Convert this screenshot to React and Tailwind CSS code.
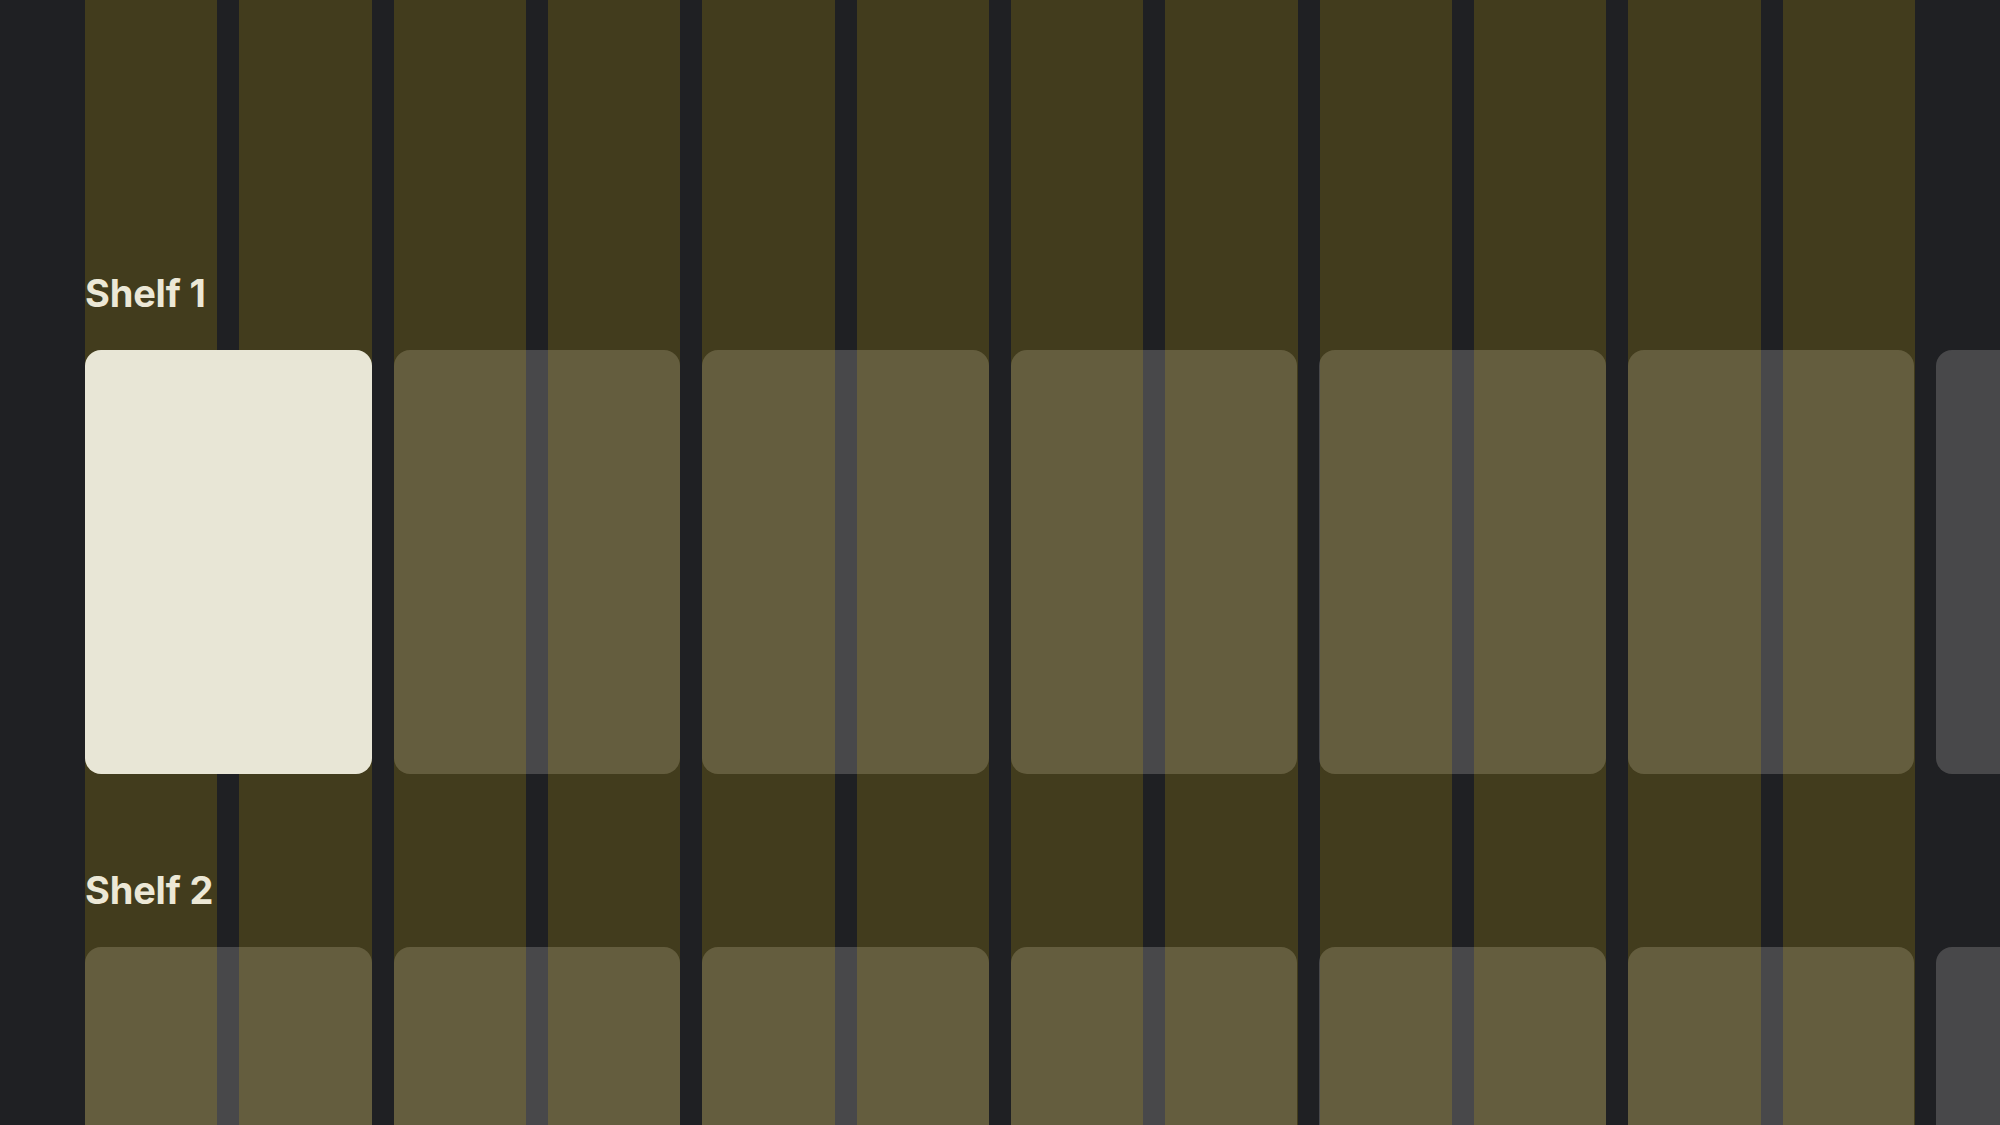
import React from "react";

function Card({ focused }) {
  return (
    <div
      className={
        "shrink-0 w-[286.5px] h-[424px] rounded-[16px] " +
        (focused ? "bg-[#e8e6d6] relative z-20" : "bg-[#48484a]")
      }
    />
  );
}

function Shelf({ title, focusIndex }) {
  return (
    <section className="flex flex-col">
      <h2 className="relative z-20 text-[38px] leading-[46px] font-bold tracking-[-0.2px] text-[#ece8d6] h-[46px]">
        {title}
      </h2>
      <div className="mt-[34px] flex gap-[22px]">
        {Array.from({ length: 8 }).map((_, i) => (
          <Card key={i} focused={i === focusIndex} />
        ))}
      </div>
    </section>
  );
}

export default function App() {
  return (
    <div
      className="relative w-[2000px] h-[1125px] overflow-hidden bg-[#1f2023]"
      style={{ fontFamily: "Inter, 'Noto Sans', sans-serif" }}
    >
      <div className="pl-[85px] pt-[270px] flex flex-col gap-[93px]">
        <Shelf title="Shelf 1" focusIndex={0} />
        <Shelf title="Shelf 2" focusIndex={-1} />
      </div>
      <div className="pointer-events-none absolute inset-0 z-10 px-[85px] grid grid-cols-12 gap-[22px]">
        {Array.from({ length: 12 }).map((_, i) => (
          <div key={i} className="h-full bg-[rgba(255,208,0,0.155)]" />
        ))}
      </div>
    </div>
  );
}
